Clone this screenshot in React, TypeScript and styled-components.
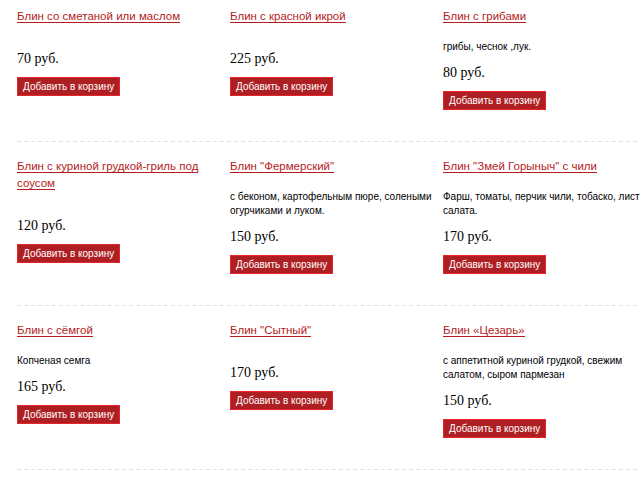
import React from "react";
import styled, { createGlobalStyle } from "styled-components";

const GlobalStyle = createGlobalStyle`
  html, body { margin: 0; padding: 0; background: #ffffff; overflow: hidden; }
  body { font-family: "Liberation Sans", Arial, sans-serif; }
`;

const Page = styled.div`
  padding: 8px 0 0 17px;
  width: 623px;
`;

const Row = styled.div`
  display: grid;
  grid-template-columns: 213px 213px 197px;
  padding-bottom: 31px;
`;

const Separator = styled.div`
  height: 1px;
  margin-bottom: 16px;
  background: repeating-linear-gradient(90deg, #e2e2e2 0 4px, transparent 4px 7px);
`;

const Item = styled.div`
  display: flex;
  flex-direction: column;
  align-items: flex-start;
  min-width: 0;
`;

const Title = styled.div`
  max-width: 195px;
  font-size: 11.5px;
  line-height: 17px;
  margin-bottom: 15px;
`;

const TitleLink = styled.a`
  color: #b41c22;
  text-decoration: none;
  border-bottom: 1px solid #b41c22;
  cursor: pointer;
`;

const Desc = styled.div`
  font-family: "Liberation Sans", Arial, sans-serif;
  font-size: 10px;
  line-height: 14px;
  color: #000;
  margin-bottom: 11px;
`;

const Price = styled.div`
  font-family: "Liberation Serif", "Times New Roman", serif;
  font-size: 14px;
  line-height: 16px;
  color: #000;
  margin-bottom: 10px;
`;

const CartButton = styled.button`
  box-sizing: border-box;
  height: 19px;
  padding: 0 5px;
  border: 1px solid #e8242b;
  background: #ae1f24;
  color: #ffffff;
  font-family: "Liberation Sans", Arial, sans-serif;
  font-size: 10px;
  letter-spacing: 0;
  line-height: 17px;
  cursor: pointer;
`;

type Product = { title: string; desc?: string; price: string };

const rows: Product[][] = [
  [
    { title: "Блин со сметаной или маслом", price: "70 руб." },
    { title: "Блин с красной икрой", price: "225 руб." },
    { title: "Блин с грибами", desc: "грибы, чеснок ,лук.", price: "80 руб." },
  ],
  [
    { title: "Блин с куриной грудкой-гриль под соусом", price: "120 руб." },
    {
      title: "Блин \"Фермерский\"",
      desc: "с беконом, картофельным пюре, солеными огурчиками и луком.",
      price: "150 руб.",
    },
    {
      title: "Блин \"Змей Горыныч\" с чили",
      desc: "Фарш, томаты, перчик чили, тобаско, лист салата.",
      price: "170 руб.",
    },
  ],
  [
    { title: "Блин с сёмгой", desc: "Копченая семга", price: "165 руб." },
    { title: "Блин \"Сытный\"", price: "170 руб." },
    {
      title: "Блин «Цезарь»",
      desc: "с аппетитной куриной грудкой, свежим салатом, сыром пармезан",
      price: "150 руб.",
    },
  ],
];

export default function App() {
  return (
    <>
      <GlobalStyle />
      <Page>
        {rows.map((row, ri) => (
          <React.Fragment key={ri}>
            <Row>
              {row.map((p, i) => (
                <Item key={i}>
                  <Title>
                    <TitleLink>{p.title}</TitleLink>
                  </Title>
                  <Desc>{p.desc}</Desc>
                  <Price>{p.price}</Price>
                  <CartButton>Добавить в корзину</CartButton>
                </Item>
              ))}
            </Row>
            <Separator />
          </React.Fragment>
        ))}
      </Page>
    </>
  );
}
